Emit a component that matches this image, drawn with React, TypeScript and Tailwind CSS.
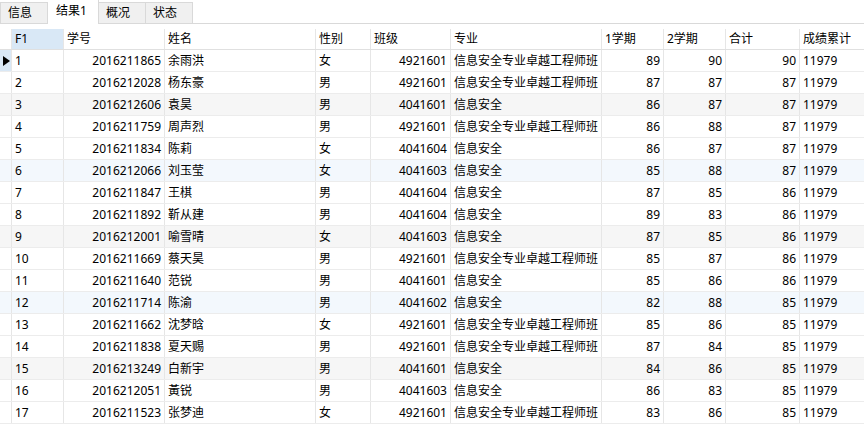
import React from "react";

const rows: [string, string, string, string, string, string, string, string, string][] = [
  ["1", "2016211865", "余雨洪", "女", "4921601", "信息安全专业卓越工程师班", "89", "90", "90"],
  ["2", "2016212028", "杨东豪", "男", "4921601", "信息安全专业卓越工程师班", "87", "87", "87"],
  ["3", "2016212606", "袁昊", "男", "4041601", "信息安全", "86", "87", "87"],
  ["4", "2016211759", "周声烈", "男", "4921601", "信息安全专业卓越工程师班", "86", "88", "87"],
  ["5", "2016211834", "陈莉", "女", "4041604", "信息安全", "86", "87", "87"],
  ["6", "2016212066", "刘玉莹", "女", "4041603", "信息安全", "85", "88", "87"],
  ["7", "2016211847", "王棋", "男", "4041604", "信息安全", "87", "85", "86"],
  ["8", "2016211892", "靳从建", "男", "4041604", "信息安全", "89", "83", "86"],
  ["9", "2016212001", "喻雪晴", "女", "4041603", "信息安全", "87", "85", "86"],
  ["10", "2016211669", "蔡天昊", "男", "4921601", "信息安全专业卓越工程师班", "85", "87", "86"],
  ["11", "2016211640", "范锐", "男", "4041601", "信息安全", "85", "86", "86"],
  ["12", "2016211714", "陈渝", "男", "4041602", "信息安全", "82", "88", "85"],
  ["13", "2016211662", "沈梦晗", "女", "4921601", "信息安全专业卓越工程师班", "85", "86", "85"],
  ["14", "2016211838", "夏天赐", "男", "4921601", "信息安全专业卓越工程师班", "87", "84", "85"],
  ["15", "2016213249", "白新宇", "男", "4041601", "信息安全", "84", "86", "85"],
  ["16", "2016212051", "黃锐", "男", "4041603", "信息安全", "86", "83", "85"],
  ["17", "2016211523", "张梦迪", "女", "4921601", "信息安全专业卓越工程师班", "83", "86", "85"],
];

const grid =
  "grid grid-cols-[12px_52px_101px_151px_55px_80px_151px_62px_62px_74px_1fr]";

const headers = ["F1", "学号", "姓名", "性别", "班级", "专业", "1学期", "2学期", "合计", "成绩累计"];

function rowBg(i: number) {
  const n = i + 1;
  if (n % 6 === 0) return "bg-[#f3f8fd]";
  if (n % 3 === 0) return "bg-[#f6f6f6]";
  return "bg-white";
}

export default function App() {
  const font = { fontFamily: '"Noto Sans", "Noto Sans CJK SC", sans-serif' };
  const cellL = "h-[21px] border-r border-[#e6e6e6] pl-[3px] leading-[21px] whitespace-nowrap overflow-hidden";
  const cellR = "h-[21px] border-r border-[#e6e6e6] pr-[3px] text-right leading-[21px] whitespace-nowrap overflow-hidden";
  return (
    <div className="w-[864px] h-[425px] overflow-hidden bg-white text-[12px] text-black" style={font}>
      {/* tabs */}
      <div className="flex h-[24px] items-end border-b border-[#d9d9d9]">
        <div className="h-[21px] w-[48px] border border-b-0 border-[#d9d9d9] bg-[#f0f0f0] pl-[7px] leading-[19px]">信息</div>
        <div className="h-[24px] w-[51px] border-r border-[#d9d9d9] bg-white pl-[8px] leading-[22px] -mb-px">结果1</div>
        <div className="h-[21px] w-[47px] border-t border-r border-[#d9d9d9] bg-[#f0f0f0] pl-[7px] leading-[19px]">概况</div>
        <div className="h-[21px] w-[47px] border-t border-r border-[#d9d9d9] bg-[#f0f0f0] pl-[7px] leading-[19px]">状态</div>
      </div>
      <div className="h-[5px]" />
      {/* header */}
      <div className={`${grid} h-[21px] border-b border-[#e0e0e0]`}>
        <div className="h-[20px] border-r border-[#e6e6e6]" />
        {headers.map((h, i) => (
          <div
            key={h}
            className={`h-[20px] pl-[3px] leading-[20px] whitespace-nowrap ${i < headers.length - 1 ? "border-r border-[#e6e6e6]" : ""} ${i === 0 ? "bg-[#d9e8f6]" : ""}`}
          >
            {h}
          </div>
        ))}
      </div>
      {/* rows */}
      {rows.map((r, i) => (
        <div key={r[0]} className={`${grid} h-[22px] border-b border-[#ececec] ${rowBg(i)}`}>
          <div className={`h-[21px] border-r border-[#e6e6e6] flex items-center ${i === 0 ? "bg-[#d9e8f6]" : ""}`}>
            {i === 0 && (
              <svg width="8" height="10" viewBox="0 0 8 10" className="ml-[3px]">
                <polygon points="0,0 7,5 0,10" fill="#000" />
              </svg>
            )}
          </div>
          <div className={cellL}>{r[0]}</div>
          <div className={cellR}>{r[1]}</div>
          <div className={cellL}>{r[2]}</div>
          <div className={cellL}>{r[3]}</div>
          <div className={cellR}>{r[4]}</div>
          <div className={cellL}>{r[5]}</div>
          <div className={cellR}>{r[6]}</div>
          <div className={cellR}>{r[7]}</div>
          <div className={cellR}>{r[8]}</div>
          <div className="h-[21px] pl-[3px] leading-[21px]">11979</div>
        </div>
      ))}
    </div>
  );
}
